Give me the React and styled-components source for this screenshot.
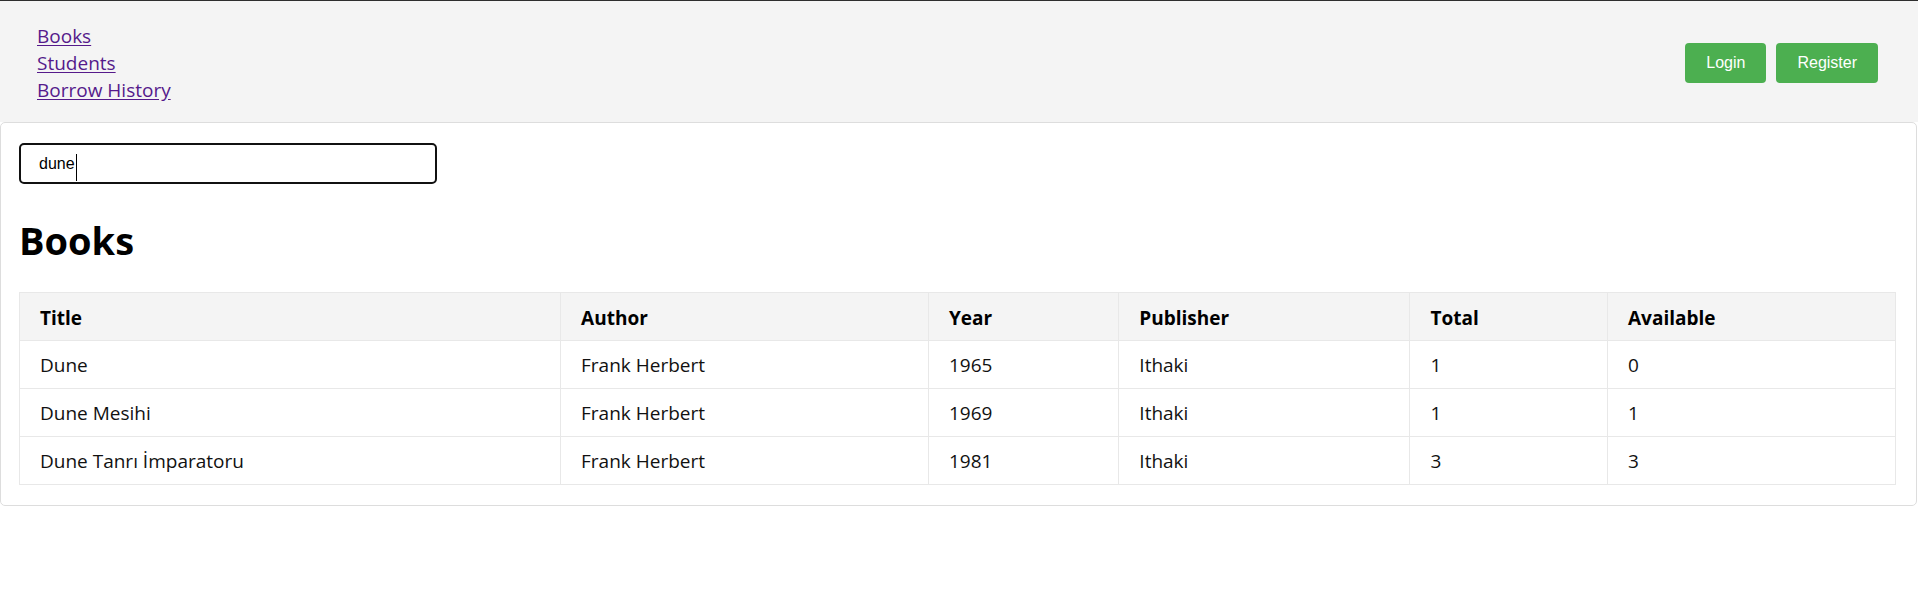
import React from "react";
import styled, { createGlobalStyle } from "styled-components";

const GlobalStyle = createGlobalStyle`
  html, body {
    margin: 0;
    padding: 0;
    background: #ffffff;
  }
  body {
    font-family: "Open Sans", "Noto Sans", sans-serif;
    color: #000;
  }
  * { box-sizing: border-box; }
`;

const Header = styled.header`
  display: flex;
  align-items: center;
  justify-content: space-between;
  background: #f4f4f4;
  border-top: 1px solid #2e2e2e;
  padding: 22px 40px 18px 37px;
`;

const NavList = styled.nav`
  display: flex;
  flex-direction: column;
  align-items: flex-start;
`;

const NavLink = styled.a`
  font-family: "Open Sans", "Noto Sans", sans-serif;
  font-size: 19px;
  line-height: 27px;
  color: #551a8b;
  text-decoration: underline;
  text-underline-offset: 2px;
`;

const Actions = styled.div`
  display: flex;
  gap: 10px;
  margin-top: -2px;
`;

const Button = styled.button`
  height: 40px;
  padding: 0 21px;
  border: none;
  border-radius: 4px;
  background: #4caf50;
  color: #ffffff;
  font-family: "Liberation Sans", Arial, sans-serif;
  font-size: 16px;
  cursor: pointer;
`;

const Card = styled.main`
  margin-right: 1px;
  border: 1px solid #dddddd;
  border-radius: 5px;
  padding: 20px 20px 20px 18px;
  background: #fff;
`;

const SearchWrap = styled.div`
  position: relative;
  width: 418px;
`;

const SearchInput = styled.input`
  display: block;
  width: 100%;
  height: 41px;
  padding: 0 18px;
  border: 2px solid #111;
  border-radius: 5px;
  font-family: "Liberation Sans", Arial, sans-serif;
  font-size: 16px;
  color: #000;
  background: #fff;
  outline: none;
  caret-color: transparent;
`;

const Caret = styled.span`
  position: absolute;
  left: 57px;
  top: 11px;
  width: 1px;
  height: 27px;
  background: #000;
`;

const Title = styled.h1`
  font-family: "Open Sans", "Noto Sans", sans-serif;
  font-size: 38px;
  font-weight: 700;
  line-height: 52px;
  margin: 30px 0 26px 0;
`;

const Table = styled.table`
  width: 100%;
  border-collapse: collapse;
  table-layout: fixed;
  border: 1px solid #e8e8e8;
`;

const Col = styled.col`
  width: ${(p) => p.$w};
`;

const HeadRow = styled.tr`
  background: #f4f4f4;
`;

const Th = styled.th`
  text-align: left;
  font-weight: 700;
  font-size: 19px;
  line-height: 27px;
  padding: 12px 20px 8px 20px;
  border: 1px solid #e8e8e8;
`;

const Td = styled.td`
  font-size: 19px;
  line-height: 27px;
  padding: 11px 20px 9px 20px;
  border: 1px solid #e8e8e8;
  color: #111;
`;

const columns = [
  { key: "title", label: "Title", w: "28.84%" },
  { key: "author", label: "Author", w: "19.61%" },
  { key: "year", label: "Year", w: "10.15%" },
  { key: "publisher", label: "Publisher", w: "15.52%" },
  { key: "total", label: "Total", w: "10.53%" },
  { key: "available", label: "Available", w: "15.35%" },
];

const books = [
  { title: "Dune", author: "Frank Herbert", year: 1965, publisher: "Ithaki", total: 1, available: 0 },
  { title: "Dune Mesihi", author: "Frank Herbert", year: 1969, publisher: "Ithaki", total: 1, available: 1 },
  { title: "Dune Tanrı İmparatoru", author: "Frank Herbert", year: 1981, publisher: "Ithaki", total: 3, available: 3 },
];

export default function App() {
  return (
    <>
      <GlobalStyle />
      <Header>
        <NavList>
          <NavLink href="#books">Books</NavLink>
          <NavLink href="#students">Students</NavLink>
          <NavLink href="#history">Borrow History</NavLink>
        </NavList>
        <Actions>
          <Button>Login</Button>
          <Button>Register</Button>
        </Actions>
      </Header>
      <Card>
        <SearchWrap>
          <SearchInput defaultValue="dune" />
          <Caret />
        </SearchWrap>
        <Title>Books</Title>
        <Table>
          <colgroup>
            {columns.map((c) => (
              <Col key={c.key} $w={c.w} />
            ))}
          </colgroup>
          <thead>
            <HeadRow>
              {columns.map((c) => (
                <Th key={c.key}>{c.label}</Th>
              ))}
            </HeadRow>
          </thead>
          <tbody>
            {books.map((b) => (
              <tr key={b.title}>
                {columns.map((c) => (
                  <Td key={c.key}>{b[c.key]}</Td>
                ))}
              </tr>
            ))}
          </tbody>
        </Table>
      </Card>
    </>
  );
}
